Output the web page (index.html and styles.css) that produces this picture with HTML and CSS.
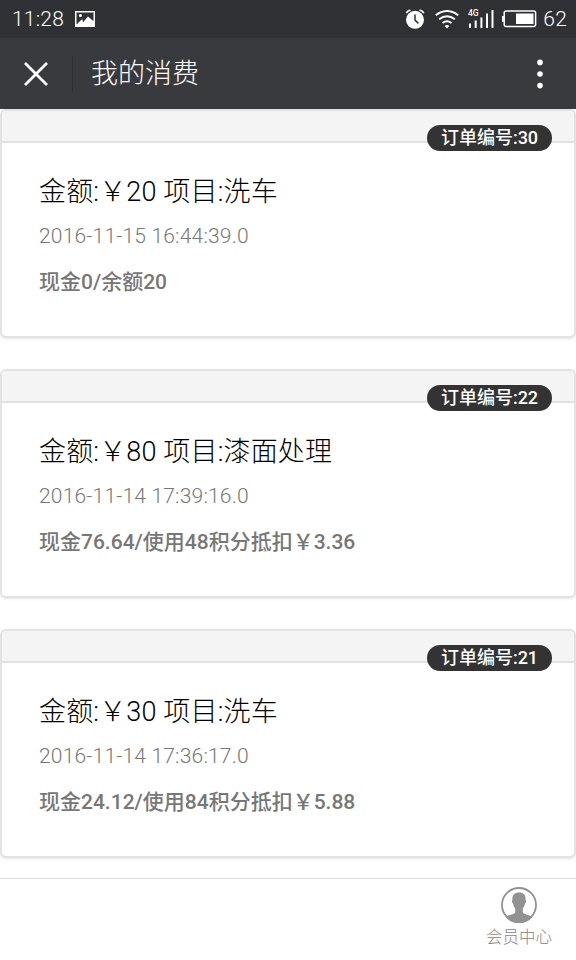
FILE: index.html
```html
<!DOCTYPE html>
<html lang="zh-CN">
<head>
    <meta charset="UTF-8">
    <meta name="viewport" content="width=device-width, initial-scale=1.0">
    <title>我的消费</title>
    <link rel="stylesheet" href="styles.css">
</head>
<body>
<div class="status-bar">
    <span class="time">11:28</span>
    <svg class="picture-icon" width="20" height="16" viewBox="0 0 20 16">
        <path d="M0 0h20v16H0z" fill="#fff"/>
        <path d="M1.5 1.5h17v8.8L13 5.4 8.3 11 6.5 9.3 1.5 13.6z" fill="#303134"/>
        <circle cx="5.4" cy="4.5" r="1.6" fill="#fff"/>
        <path d="M3.5 12.5l4-3.8" stroke="#fff" stroke-width="1.3"/>
    </svg>
    <div class="status-icons">
        <svg class="alarm-icon" width="20" height="20" viewBox="0 0 20 20" fill="none" stroke="#fff">
            <circle cx="10" cy="10.8" r="9" fill="#fff" stroke="none"/>
            <path d="M1.3 4.3Q2.4 1.5 5.5 1.3M14.5 1.3Q17.6 1.5 18.7 4.3" stroke-width="1.6"/>
            <path d="M10 5.5v5.6l3.4 3.3" stroke="#303134" stroke-width="1.5"/>
        </svg>
        <svg class="wifi-icon" width="24" height="19" viewBox="0 0 24 19" fill="none" stroke="#fff" stroke-width="2">
            <path d="M.8 5.2Q12-3.2 23.2 5.2M4.1 9.3Q12 3.2 19.9 9.3M7.5 13Q12 9.6 16.5 13"/>
            <path d="M9.5 16Q12 13.8 14.5 16L12 18.6z" fill="#fff" stroke="none"/>
        </svg>
        <svg class="signal-icon" width="26" height="20" viewBox="0 0 26 20">
            <path d="M1 14.5h2V19H1zM6.7 11.5h2V19h-2zM12.4 8.5h2V19h-2zM18 4.5h2V19h-2zM23.5 1h2v18h-2z" fill="#fff"/>
            <text class="network" x="0" y="7.3">4G</text>
        </svg>
        <svg class="battery-icon" width="35" height="18" viewBox="0 0 35 18">
            <rect x="2.2" y="1" width="31.4" height="15.5" rx="2" fill="none" stroke="#fff" stroke-width="1.5"/>
            <path d="M0 6h1.8v6H0zM14 3.5h17.5V14H14z" fill="#fff"/>
        </svg>
        <span class="percent">62</span>
    </div>
</div>

<div class="title-bar">
    <svg class="close-icon" width="24" height="24" viewBox="0 0 24 24" stroke="#fff" stroke-width="2.8">
        <path d="M1 1l22 22M23 1L1 23"/>
    </svg>
    <h1>我的消费</h1>
    <svg class="more-icon" width="6" height="30" viewBox="0 0 6 30" fill="#fff">
        <circle cx="3" cy="3.4" r="2.8"/>
        <circle cx="3" cy="15" r="2.8"/>
        <circle cx="3" cy="26.6" r="2.8"/>
    </svg>
</div>

<div class="orders">
    <div class="card">
        <div class="card-header"><span class="badge">订单编号:30</span></div>
        <div class="card-body">
            <h2>金额:￥20 项目:洗车</h2>
            <p class="date">2016-11-15 16:44:39.0</p>
            <p class="payment">现金0/余额20</p>
        </div>
    </div>
    <div class="card">
        <div class="card-header"><span class="badge">订单编号:22</span></div>
        <div class="card-body">
            <h2>金额:￥80 项目:漆面处理</h2>
            <p class="date">2016-11-14 17:39:16.0</p>
            <p class="payment">现金76.64/使用48积分抵扣￥3.36</p>
        </div>
    </div>
    <div class="card">
        <div class="card-header"><span class="badge">订单编号:21</span></div>
        <div class="card-body">
            <h2>金额:￥30 项目:洗车</h2>
            <p class="date">2016-11-14 17:36:17.0</p>
            <p class="payment">现金24.12/使用84积分抵扣￥5.88</p>
        </div>
    </div>
</div>

<div class="tab-bar">
    <a class="tab">
        <svg width="36" height="36" viewBox="0 0 36 36">
            <circle cx="18" cy="18" r="17" fill="none" stroke="#929292" stroke-width="1.8"/>
            <path d="M18 5.5c4.6 0 7 2.6 6.6 7.2.8.5.4 3.4-.7 4-.4 2.2-1.1 3.5-2.1 4.5v3.6c0 3 7 2.8 9.4 5.4A17.5 17.5 0 0 1 4.8 30.2c2.4-2.6 9.4-2.4 9.4-5.4v-3.6c-1-1-1.7-2.3-2.1-4.5-1.1-.6-1.5-3.5-.7-4C11 8.1 13.4 5.5 18 5.5z" fill="#929292"/>
        </svg>
        <span>会员中心</span>
    </a>
</div>
</body>
</html>
```

FILE: styles.css
```css
* {
    box-sizing: border-box;
}
body {
    margin: 0;
    height: 960px;
    display: flex;
    flex-direction: column;
    overflow: hidden;
    background-color: #fff;
    color: #000;
    font-family: Roboto, "Noto Sans CJK SC", sans-serif;
    font-weight: 300;
}
h1, h2, p {
    margin: 0;
    font-weight: 300;
    white-space: nowrap;
}
svg {
    display: block;
    flex: none;
}
.status-bar {
    flex: none;
    height: 38px;
    display: flex;
    align-items: center;
    padding: 0 9px 0 12px;
    background-color: #303134;
    color: #fff;
    font-size: 21px;
    letter-spacing: 0.2px;
}
.time {
    width: 63px;
}
.status-icons {
    display: flex;
    align-items: center;
    margin-left: auto;
}
.wifi-icon {
    margin-left: 10px;
}
.signal-icon {
    margin-left: 9px;
}
.network {
    font-size: 8.5px;
    font-weight: 500;
    letter-spacing: 0;
    fill: #fff;
}
.battery-icon {
    margin-left: 8px;
}
.percent {
    margin-left: 6px;
}
.title-bar {
    flex: none;
    height: 71px;
    display: flex;
    align-items: center;
    padding: 0 33px 0 24px;
    background-color: #393a3e;
    color: #fff;
}
.title-bar h1 {
    height: 36px;
    margin-left: 24px;
    padding-left: 18px;
    border-left: 1px solid #2e2f32;
    font-size: 27px;
    line-height: 36px;
}
.more-icon {
    margin-left: auto;
}
.orders {
    flex: 1;
    min-height: 0;
    display: flex;
    flex-direction: column;
    gap: 31px;
}
.card {
    flex: none;
    height: 229px;
    border: 2px solid #e2e2e2;
    border-radius: 6px;
    box-shadow: 0 1px 3px rgba(0, 0, 0, 0.1);
}
.card-header {
    position: relative;
    height: 32px;
    border-bottom: 2px solid #e2e2e2;
    border-radius: 4px 4px 0 0;
    background-color: #f4f4f4;
}
.badge {
    position: absolute;
    top: 14px;
    right: 22px;
    width: 125px;
    height: 26px;
    border-radius: 13px;
    background-color: #333;
    color: #fff;
    font-size: 18px;
    font-weight: 500;
    line-height: 25px;
    text-align: center;
}
.card-body {
    padding: 29px 37px 0;
}
.card-body h2 {
    font-size: 27px;
    line-height: 40px;
    letter-spacing: 0.16px;
}
.date {
    margin-top: 8px;
    color: #777;
    font-size: 21px;
    line-height: 32px;
    letter-spacing: 0.19px;
}
.payment {
    margin-top: 14px;
    color: #777;
    font-size: 21px;
    font-weight: 500;
    line-height: 32px;
}
.tab-bar {
    flex: none;
    height: 82px;
    display: flex;
    justify-content: flex-end;
    padding: 8px 24px 0;
    border-top: 1px solid #ddd;
    background-color: #fff;
}
.tab {
    display: flex;
    flex-direction: column;
    align-items: center;
    color: #868686;
    font-size: 16.5px;
    line-height: 30px;
}
```
